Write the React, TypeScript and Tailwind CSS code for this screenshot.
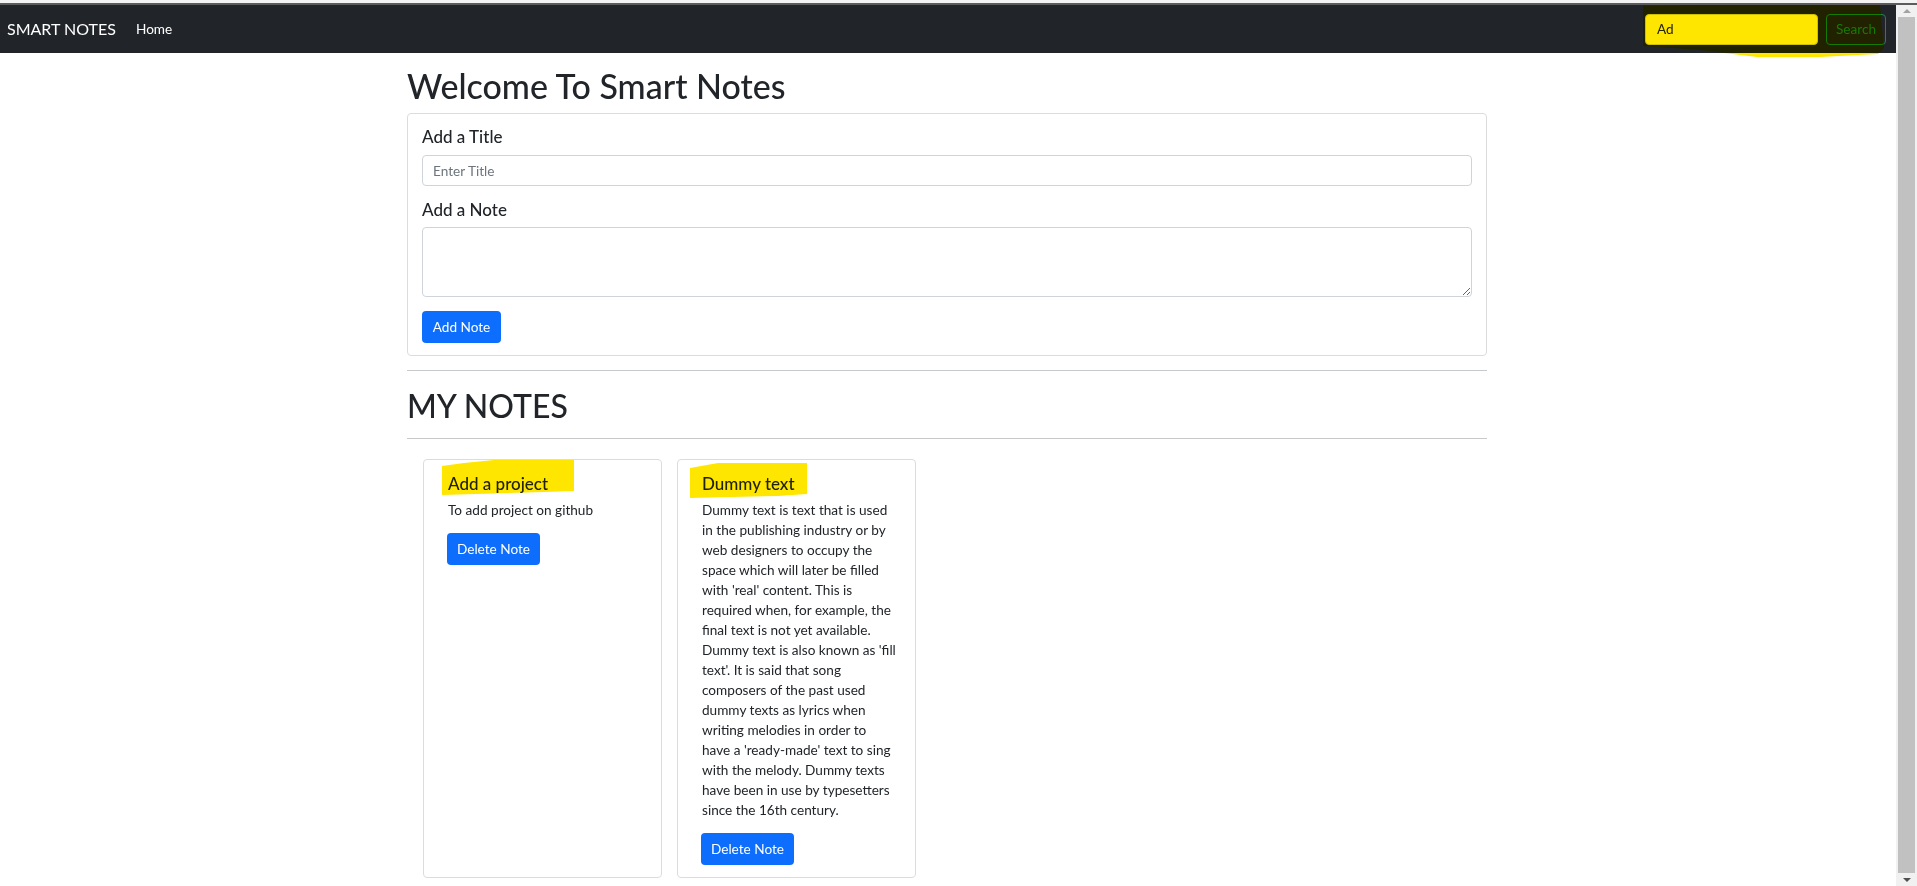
import React from "react";

const dummy =
  "Dummy text is text that is used in the publishing industry or by web designers to occupy the space which will later be filled with 'real' content. This is required when, for example, the final text is not yet available. Dummy text is also known as 'fill text'. It is said that song composers of the past used dummy texts as lyrics when writing melodies in order to have a 'ready-made' text to sing with the melody. Dummy texts have been in use by typesetters since the 16th century.";

const notes = [
  { title: "Add a project", body: "To add project on github", mark: "18,6 40,3 70,0 150,0 150,31 120,32 18,35" },
  { title: "Dummy text", body: dummy, mark: "12,8 40,3 129,3 129,34 100,36 12,38" },
];

function Scrollbar() {
  return (
    <div className="w-[21px] bg-[#f1f1f1] flex flex-col items-center">
      <div className="h-[12px] flex items-center justify-center">
        <div className="w-0 h-0 border-x-[4px] border-x-transparent border-b-[4px] border-b-[#a3a3a3]" />
      </div>
      <div className="w-[17px] flex-1 bg-[#c1c1c1]" />
      <div className="h-[13px] flex items-center justify-center">
        <div className="w-0 h-0 border-x-[4px] border-x-transparent border-t-[4px] border-t-[#505050]" />
      </div>
    </div>
  );
}

function NoteCard({ title, body, mark }: { title: string; body: string; mark: string }) {
  return (
    <div className="relative w-[239px] h-[419px] border border-[#dcdcdc] rounded-[4px] pl-[24px] pr-[18px] pt-[11px]">
      <h5 className="text-[17px] leading-[25px] font-medium text-[#212529]">{title}</h5>
      <p className="mt-[4px] text-[13.6px] leading-[20px] text-[#212529]">{body}</p>
      <button className="mt-[13px] -ml-[1px] w-[93px] h-[32px] rounded-[4px] bg-[#0d6efd] text-white text-[13.6px]">
        Delete Note
      </button>
      {/* highlighter stroke */}
      <svg className="absolute left-0 top-0 mix-blend-multiply pointer-events-none" width="239" height="60">
        <polygon points={mark} fill="#ffe600" />
      </svg>
    </div>
  );
}

export default function App() {
  return (
    <div className="relative h-[886px] overflow-hidden flex flex-col bg-white font-['Lato',sans-serif]">
      <div className="h-[3px] bg-[#f3f3f3]" />
      <div className="h-[2px] bg-[#5c5c5c]" />
      <div className="flex flex-1 min-h-0">
        <div className="flex-1">
          {/* navbar */}
          <nav className="h-[48px] bg-[#212529] flex items-center pl-[7px] pr-[10px]">
            <span className="text-[16px] text-white">SMART NOTES</span>
            <span className="ml-[20px] text-[13.6px] text-white">Home</span>
            <div className="ml-auto flex gap-[8px]">
              <div className="w-[173px] h-[31px] bg-white rounded-[4px] border border-[#ced4da] pl-[11px] flex items-center text-[13.6px] text-[#212529]">
                Ad
              </div>
              <button className="w-[60px] h-[31px] rounded-[4px] border border-[#198754] text-[#198754] text-[13.6px]">
                Search
              </button>
            </div>
          </nav>

          <main className="w-[1080px] mx-auto -translate-x-[1px]">
            <h1 className="mt-[13px] mb-[7px] text-[34px] leading-[40px] font-medium text-[#212529]">Welcome To Smart Notes</h1>

            <div className="border border-[#dcdcdc] rounded-[4px] px-[14px] pt-[10px] pb-[12px]">
              <label className="block text-[17px] leading-[25px] font-medium text-[#212529]">Add a Title</label>
              <input
                placeholder="Enter Title"
                className="mt-[6px] w-full h-[31px] border border-[#ced4da] rounded-[4px] px-[10px] text-[13.6px] placeholder:text-[#6c757d] outline-none"
              />
              <label className="block mt-[11px] text-[17px] leading-[25px] font-medium text-[#212529]">Add a Note</label>
              <textarea className="block mt-[5px] w-full h-[70px] border border-[#ced4da] rounded-[4px] px-[10px] py-[5px] text-[13.6px] outline-none" />
              <button className="mt-[14px] w-[79px] h-[32px] rounded-[4px] bg-[#0d6efd] text-white text-[13.6px]">Add Note</button>
            </div>

            <hr className="mt-[14px] border-[#c8c9ca]" />
            <h2 className="mt-[16px] text-[32px] leading-[38px] font-medium text-[#212529]">MY NOTES</h2>
            <hr className="mt-[13px] border-[#c8c9ca]" />

            <div className="mt-[20px] ml-[16px] flex gap-[15px]">
              {notes.map((n) => (
                <NoteCard key={n.title} {...n} />
              ))}
            </div>
          </main>
        </div>
        <Scrollbar />
      </div>

      {/* highlighter stroke over the search box */}
      <svg className="absolute left-0 top-0 mix-blend-multiply pointer-events-none" width="1917" height="70">
        <polygon
          points="1643,6 1700,5 1880,5 1884,48 1878,54 1820,57 1757,57 1700,50 1643,46"
          fill="#ffe600"
        />
      </svg>
    </div>
  );
}
